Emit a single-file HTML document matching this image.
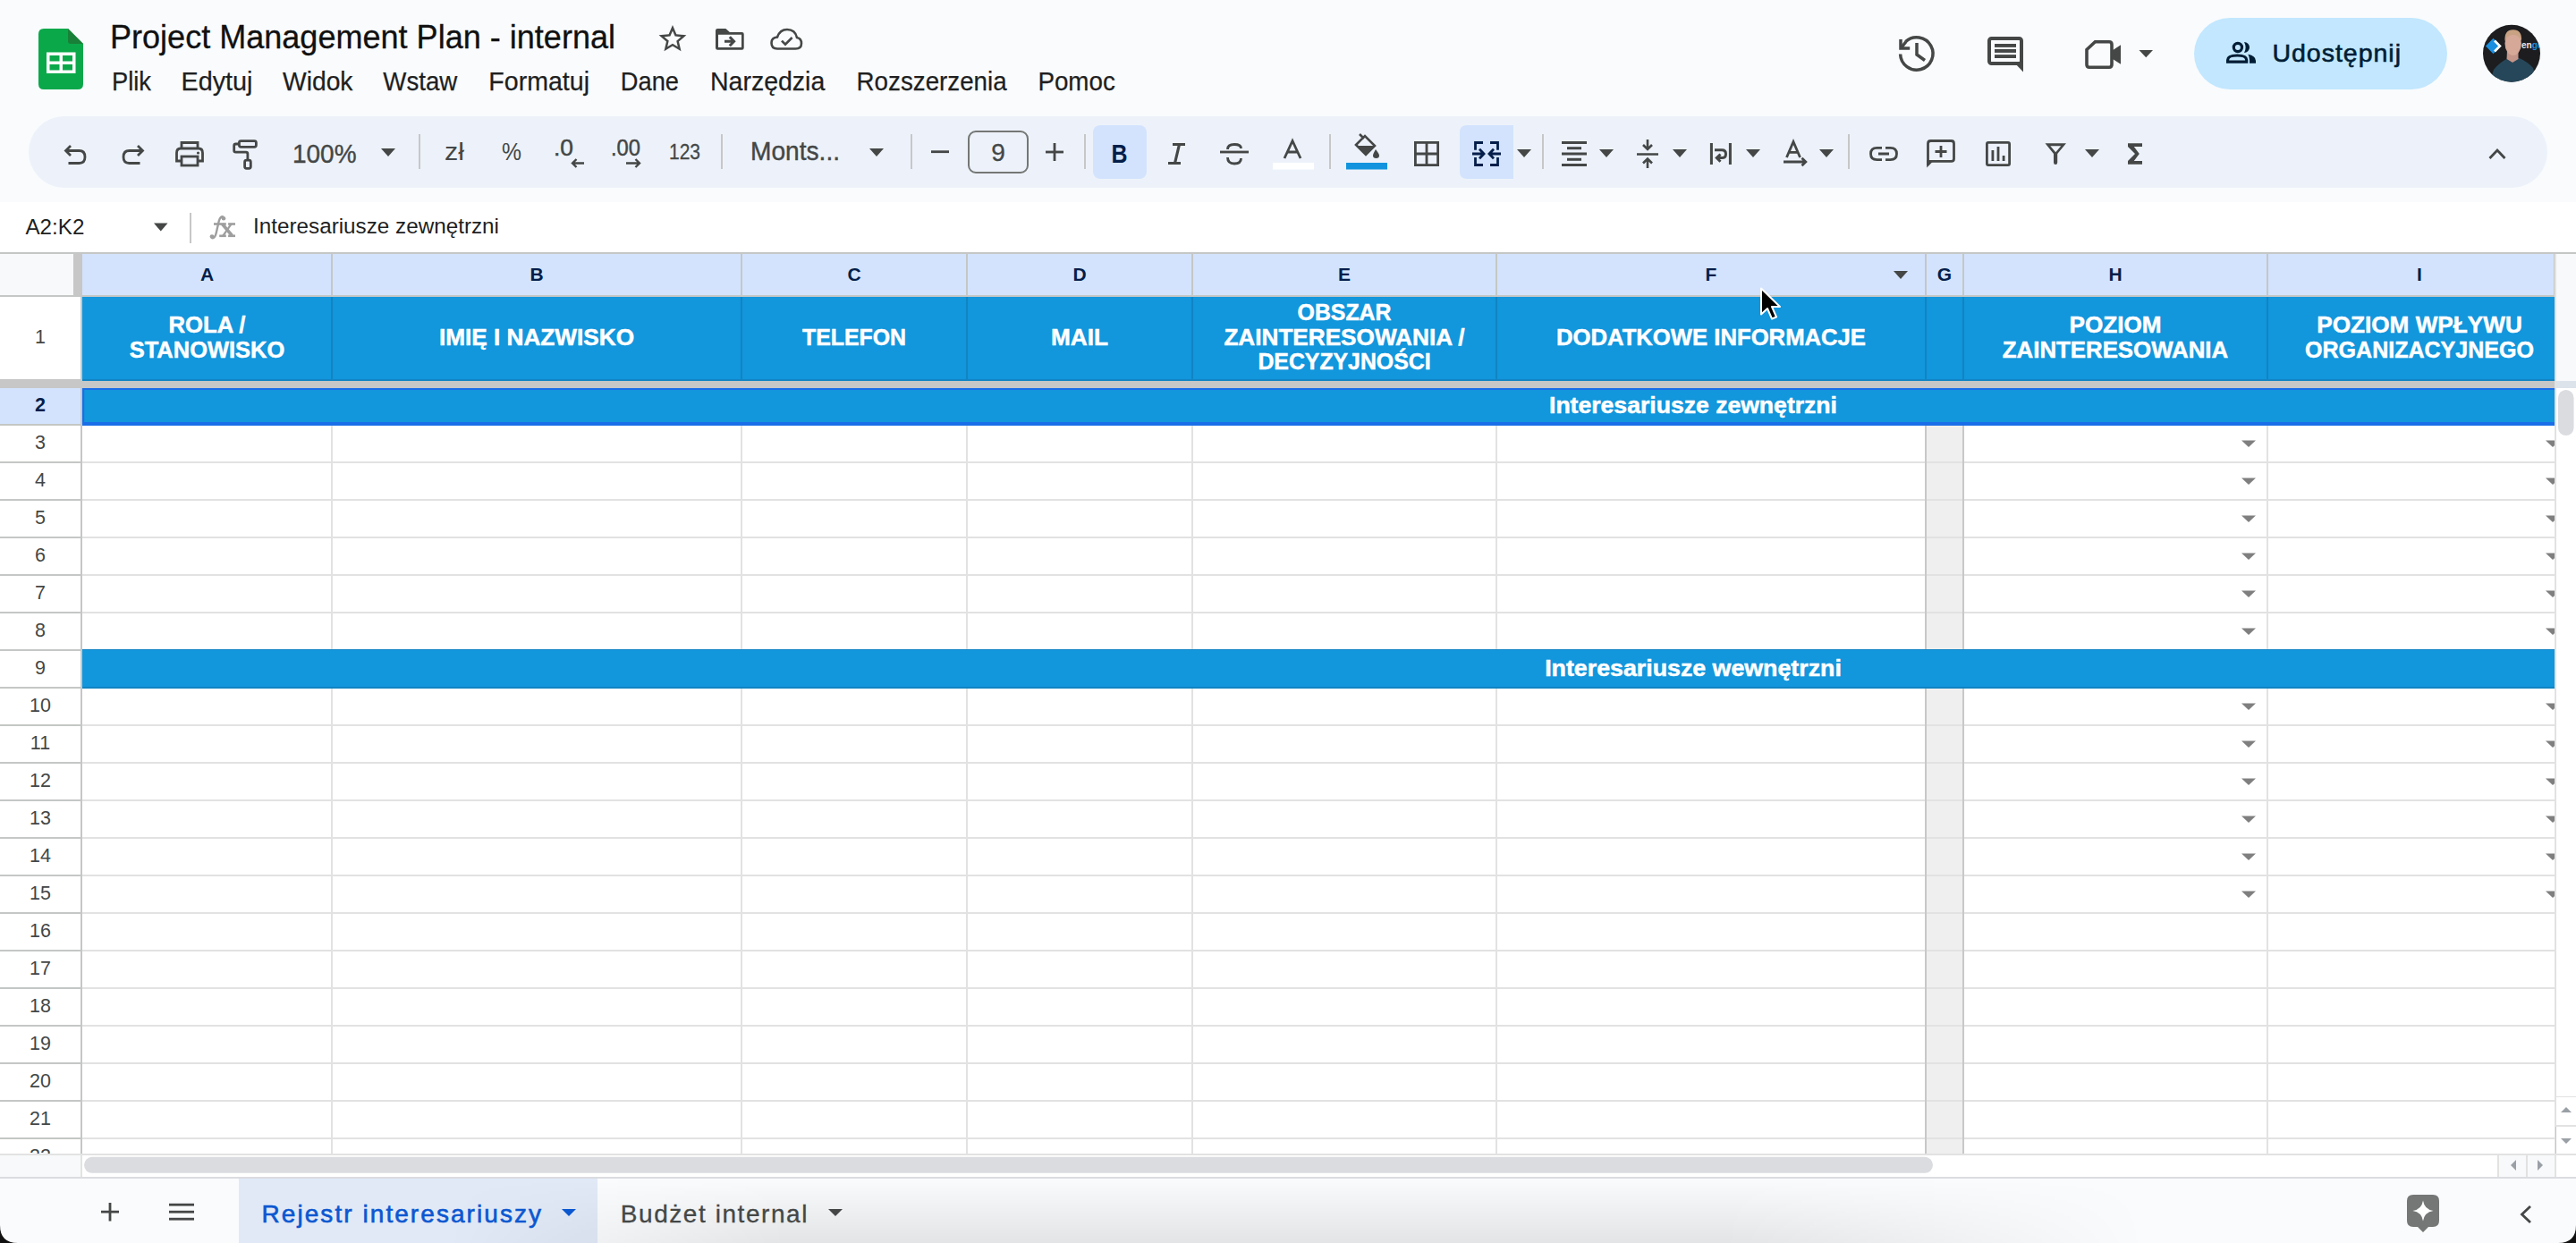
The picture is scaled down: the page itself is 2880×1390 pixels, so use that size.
<!DOCTYPE html>
<html><head><meta charset="utf-8"><title>Project Management Plan - internal</title>
<style>
html,body{margin:0;padding:0;width:2880px;height:1390px;overflow:hidden;background:#f9fbfd;}
svg{display:block;font-family:"Liberation Sans", sans-serif;}
</style></head><body>
<svg width="2880" height="1390" viewBox="0 0 2880 1390">
<rect x="0" y="0" width="2880" height="226" fill="#f9fbfd" rx="0" />
<path d="M49,32 H76 L93,49 V94 Q93,100 87,100 H49 Q43,100 43,94 V38 Q43,32 49,32 Z" fill="#0ba84a"/>
<path d="M76,32 L93,49 H79 Q76,49 76,46 Z" fill="#188038"/>
<rect x="52" y="58.5" width="32.5" height="23.5" fill="#fff"/>
<rect x="55.5" y="62" width="11" height="6.5" fill="#0ba84a"/><rect x="70" y="62" width="11" height="6.5" fill="#0ba84a"/>
<rect x="55.5" y="72" width="11" height="6.5" fill="#0ba84a"/><rect x="70" y="72" width="11" height="6.5" fill="#0ba84a"/>
<text x="123" y="54" font-size="36" fill="#111" font-weight="normal" text-anchor="start" textLength="565" lengthAdjust="spacingAndGlyphs" stroke="#111" stroke-width="0.3">Project Management Plan - internal</text>
<text x="125" y="101.3" font-size="29.3" fill="#1f1f1f" font-weight="normal" text-anchor="start" textLength="44" lengthAdjust="spacingAndGlyphs" stroke="#1f1f1f" stroke-width="0.25">Plik</text>
<text x="202.5" y="101.3" font-size="29.3" fill="#1f1f1f" font-weight="normal" text-anchor="start" textLength="80" lengthAdjust="spacingAndGlyphs" stroke="#1f1f1f" stroke-width="0.25">Edytuj</text>
<text x="316" y="101.3" font-size="29.3" fill="#1f1f1f" font-weight="normal" text-anchor="start" textLength="78.5" lengthAdjust="spacingAndGlyphs" stroke="#1f1f1f" stroke-width="0.25">Widok</text>
<text x="428.3" y="101.3" font-size="29.3" fill="#1f1f1f" font-weight="normal" text-anchor="start" textLength="83" lengthAdjust="spacingAndGlyphs" stroke="#1f1f1f" stroke-width="0.25">Wstaw</text>
<text x="546.3" y="101.3" font-size="29.3" fill="#1f1f1f" font-weight="normal" text-anchor="start" textLength="112.7" lengthAdjust="spacingAndGlyphs" stroke="#1f1f1f" stroke-width="0.25">Formatuj</text>
<text x="693.8" y="101.3" font-size="29.3" fill="#1f1f1f" font-weight="normal" text-anchor="start" textLength="65.2" lengthAdjust="spacingAndGlyphs" stroke="#1f1f1f" stroke-width="0.25">Dane</text>
<text x="794" y="101.3" font-size="29.3" fill="#1f1f1f" font-weight="normal" text-anchor="start" textLength="128.3" lengthAdjust="spacingAndGlyphs" stroke="#1f1f1f" stroke-width="0.25">Narzędzia</text>
<text x="957.6" y="101.3" font-size="29.3" fill="#1f1f1f" font-weight="normal" text-anchor="start" textLength="168" lengthAdjust="spacingAndGlyphs" stroke="#1f1f1f" stroke-width="0.25">Rozszerzenia</text>
<text x="1160.4" y="101.3" font-size="29.3" fill="#1f1f1f" font-weight="normal" text-anchor="start" textLength="86.4" lengthAdjust="spacingAndGlyphs" stroke="#1f1f1f" stroke-width="0.25">Pomoc</text>
<path transform="translate(733.5,25) scale(1.54)" d="M22 9.24l-7.19-.62L12 2 9.19 8.63 2 9.24l5.46 4.73L5.82 21 12 17.27 18.18 21l-1.63-7.03L22 9.24zM12 15.4l-3.76 2.27 1-4.28-3.32-2.88 4.38-.38L12 6.1l1.71 4.04 4.38.38-3.32 2.88 1 4.28L12 15.4z" fill="#444746"/>
<path fill-rule="evenodd" d="M800,34.2 Q800,32 802.2,32 H811.4 L815.9,35.9 H829.5 Q831.7,35.9 831.7,38.1 V53.6 Q831.7,55.8 829.5,55.8 H802.2 Q800,55.8 800,53.6 Z M803,38.8 H829 V53 H803 Z" fill="#444746"/>
<path d="M810,46.2 H820 M815.8,41.2 L820.6,46.2 L815.8,51.2" fill="none" stroke="#444746" stroke-width="3"/>
<path d="M869,54.5 Q862.5,54.5 862.5,48 Q862.5,42 869,41.5 Q872,33 880,33 Q889,33 891,42 Q896,43 896,48.5 Q896,54.5 889.5,54.5 Z" fill="none" stroke="#444746" stroke-width="2.6"/>
<path d="M874,45.6 L878,49.7 L885.6,42" fill="none" stroke="#444746" stroke-width="2.6"/>
<g fill="none" stroke="#444746" stroke-width="3.5"><path d="M2124.6,60.5 A18.2,18.2 0 1 0 2130.5,46.5"/><path d="M2125,44 V54 H2135.2"/><path d="M2126,53 L2131,46.5"/><path d="M2143,48 V61 L2152,67.5"/></g>
<rect x="2224" y="43" width="36" height="28" rx="2.5" fill="none" stroke="#444746" stroke-width="4"/>
<rect x="2230" y="49" width="24" height="3.9" fill="#444746"/><rect x="2230" y="55" width="24" height="3.9" fill="#444746"/><rect x="2230" y="61.1" width="24" height="3.9" fill="#444746"/>
<path d="M2252,70 L2262,80.6 V68 Z" fill="#444746"/>
<path d="M2342.4,46.7 H2358 Q2361,46.7 2361,49.7 V72.2 Q2361,75.2 2358,75.2 H2336 Q2333,75.2 2333,72.2 V55.5 Z" fill="none" stroke="#444746" stroke-width="3.6"/>
<path d="M2360,57.5 L2371,50.3 V71.7 L2360,64.7 Z" fill="#444746"/>
<path d="M2391.5,56 H2407 L2399.25,64.3 Z" fill="#444746"/>
<rect x="2453" y="20" width="283" height="80" fill="#c2e7ff" rx="40" />
<g fill="none" stroke="#001d35" stroke-width="3.2"><circle cx="2501.9" cy="53" r="4.6"/><path d="M2490.6,69.2 V67 Q2490.6,62 2501.2,62 Q2511.7,62 2511.7,67 V69.2 Z"/></g>
<path d="M2509,47 A6,6 0 0 1 2509,59 Q2512.3,53 2509,47 Z" fill="#001d35"/>
<path d="M2513.3,60.8 Q2522,62.5 2522,68 V70.8 H2515 V67 Q2515,63 2513.3,60.8 Z" fill="#001d35"/>
<text x="2540.4" y="68.9" font-size="28.5" fill="#001d35" font-weight="normal" text-anchor="start" textLength="143.6" lengthAdjust="spacing" stroke="#001d35" stroke-width="0.6">Udostępnij</text>
<defs><clipPath id="av"><circle cx="2808" cy="59.8" r="32"/></clipPath></defs>
<g clip-path="url(#av)"><rect x="2776" y="27" width="64" height="66" fill="#1d1d1f"/><path d="M2783,93 L2788,78 Q2794,70 2802.5,66 L2809,70 L2815.5,64.5 Q2826,69 2832,76 L2837,93 Z" fill="#26475a"/><path d="M2803,57 H2815.5 V66 L2809,70 L2802.5,66 Z" fill="#c4968a"/><ellipse cx="2809.7" cy="48.5" rx="9.2" ry="13.5" fill="#d5a898"/><path d="M2800.5,46 Q2799.5,33.3 2809.7,33.3 Q2820,33.3 2819,46 Q2816,38.5 2809.7,39 Q2803.5,38.5 2800.5,46 Z" fill="#c8a283"/><path d="M2787.5,42.8 L2796,51.5 L2787.5,60.2 L2779,51.5 Z" fill="#1a8fe0"/><path d="M2789,45.5 L2795,51.5 L2789,57.5" fill="none" stroke="#fff" stroke-width="2.6"/><text x="2819" y="54" font-size="10" font-weight="bold" fill="#e8e8e8">en<tspan fill="#1a8fe0">go</tspan></text></g>
<rect x="32" y="130" width="2816" height="80" fill="#edf2fa" rx="40" />
<path d="M79,163 L73.5,168.5 L79,174 M73.5,168.5 H88.5 Q95,168.5 95,175.5 Q95,182.5 88.5,182.5 H76.5" fill="none" stroke="#444746" stroke-width="2.8"/>
<path d="M154,163 L159.5,168.5 L154,174 M159.5,168.5 H144.5 Q138,168.5 138,175.5 Q138,182.5 144.5,182.5 H156.5" fill="none" stroke="#444746" stroke-width="2.8"/>
<g fill="none" stroke="#444746" stroke-width="2.8"><path d="M203,166 V159.5 H221 V166"/><path d="M203,180 H197.5 V171 Q197.5,166 202,166 H222 Q226.5,166 226.5,171 V180 H221"/><rect x="203" y="175" width="18" height="10"/></g><circle cx="221.5" cy="171" r="1.6" fill="#444746"/>
<g fill="none" stroke="#444746" stroke-width="2.8"><rect x="267.4" y="157.6" width="19" height="6.7" rx="2"/><path d="M266,161 H263.6 Q261.7,161 261.7,163 V168.3 Q261.7,170.2 263.6,170.2 H275 Q276.9,170.2 276.9,172 V179"/><rect x="273.6" y="179.2" width="6.7" height="9.1" rx="2"/></g>
<text x="327" y="182.2" font-size="29" fill="#444746" font-weight="normal" text-anchor="start" textLength="71.5" lengthAdjust="spacingAndGlyphs" stroke="#444746" stroke-width="0.4">100%</text>
<path d="M426,166 H442 L434.0,175 Z" fill="#444746"/>
<rect x="468" y="150" width="2" height="39" fill="#c7c7c7" rx="0" />
<text x="497" y="179.4" font-size="27" fill="#444746" font-weight="normal" text-anchor="start" textLength="22" lengthAdjust="spacingAndGlyphs" >zł</text>
<text x="561" y="179.4" font-size="27" fill="#444746" font-weight="normal" text-anchor="start" textLength="22" lengthAdjust="spacingAndGlyphs" >%</text>
<text x="619" y="173.5" font-size="26" fill="#444746" font-weight="normal" text-anchor="start" textLength="22" lengthAdjust="spacingAndGlyphs" stroke="#444746" stroke-width="0.5">.0</text>
<path d="M653,182.5 H640 M644.5,178 L640,182.5 L644.5,187" fill="none" stroke="#444746" stroke-width="2.4"/>
<text x="683" y="173.5" font-size="26" fill="#444746" font-weight="normal" text-anchor="start" textLength="33" lengthAdjust="spacingAndGlyphs" stroke="#444746" stroke-width="0.5">.00</text>
<path d="M700,182.5 H715 M710.5,178 L715,182.5 L710.5,187" fill="none" stroke="#444746" stroke-width="2.4"/>
<text x="748" y="178" font-size="23.5" fill="#444746" font-weight="normal" text-anchor="start" textLength="35" lengthAdjust="spacingAndGlyphs" stroke="#444746" stroke-width="0.3">123</text>
<rect x="806" y="150" width="2" height="39" fill="#c7c7c7" rx="0" />
<text x="839" y="179.4" font-size="28.8" fill="#444746" font-weight="normal" text-anchor="start" textLength="100" lengthAdjust="spacingAndGlyphs" stroke="#444746" stroke-width="0.4">Monts...</text>
<path d="M972,166 H988 L980.0,175 Z" fill="#444746"/>
<rect x="1018" y="150" width="2" height="39" fill="#c7c7c7" rx="0" />
<rect x="1041" y="168.3" width="20" height="2.8" fill="#444746" rx="0" />
<rect x="1083" y="147" width="66" height="46" fill="none" rx="8" stroke="#747775" stroke-width="2"/>
<text x="1116" y="180" font-size="28" fill="#444746" font-weight="normal" text-anchor="middle" stroke="#444746" stroke-width="0.3">9</text>
<rect x="1169" y="168.6" width="20" height="2.8" fill="#444746" rx="0" />
<rect x="1177.6" y="160" width="2.8" height="20" fill="#444746" rx="0" />
<rect x="1212" y="150" width="2" height="39" fill="#c7c7c7" rx="0" />
<rect x="1222" y="140" width="60" height="60" fill="#d3e3fd" rx="8" />
<text x="1242.5" y="181.7" font-size="29" fill="#041e49" font-weight="bold" text-anchor="start" textLength="18" lengthAdjust="spacingAndGlyphs" >B</text>
<path d="M1311,161.5 H1325 M1318.5,161.5 L1313.5,182.5 M1306,182.5 H1320" fill="none" stroke="#444746" stroke-width="3.2"/>
<path d="M1364,170 H1396" stroke="#444746" stroke-width="2.8"/><path d="M1372.5,167 Q1372.5,161.5 1380,161.5 Q1387.5,161.5 1387.5,166" fill="none" stroke="#444746" stroke-width="2.8"/><path d="M1372.5,176 Q1372.5,183 1380,183 Q1387.5,183 1387.5,177" fill="none" stroke="#444746" stroke-width="2.8"/>
<path d="M1436,177 L1445,157.5 L1454,177 M1439.5,170 H1450.5" fill="none" stroke="#444746" stroke-width="2.8"/>
<rect x="1423" y="182" width="46" height="7.5" fill="#ffffff" rx="0" />
<rect x="1486" y="150" width="2" height="39" fill="#c7c7c7" rx="0" />
<path d="M1520,150 L1525,155 M1516,162 L1526,152 L1537,163 L1527,173 Z" fill="none" stroke="#444746" stroke-width="2.6"/><path d="M1516,163 H1537 L1527,173 Z" fill="#444746"/><path d="M1538,167 Q1542,172 1542,174 Q1542,177 1538.5,177 Q1535,177 1535,174 Q1535,172 1538,167 Z" fill="#444746"/>
<rect x="1505" y="182" width="46" height="7.5" fill="#1194dd" rx="0" />
<g fill="none" stroke="#444746" stroke-width="2.8"><rect x="1582.4" y="159.4" width="25.2" height="25.2"/><path d="M1595,159.4 V184.6 M1582.4,172 H1607.6"/></g>
<path d="M1640,140 H1692 V200 H1640 Q1632,200 1632,192 V148 Q1632,140 1640,140 Z" fill="#d3e3fd"/>
<g fill="none" stroke="#041e49" stroke-width="2.8"><path d="M1658,159.5 H1649.5 V167.8 M1649.5,176 V184.5 H1658 M1666,159.5 H1674.5 V167.8 M1674.5,176 V184.5 H1666"/><path d="M1646,172 H1657 M1654,166.8 L1659,172 L1654,177.2 M1678,172 H1667 M1670,166.8 L1665,172 L1670,177.2"/></g>
<path d="M1696,167 H1712 L1704.0,176 Z" fill="#444746"/>
<rect x="1724" y="150" width="2" height="39" fill="#c7c7c7" rx="0" />
<g fill="#444746"><rect x="1746" y="158" width="28" height="3"/><rect x="1752" y="164.2" width="16" height="3"/><rect x="1746" y="170.5" width="28" height="3"/><rect x="1752" y="176.8" width="16" height="3"/><rect x="1746" y="183" width="28" height="3"/></g>
<path d="M1788,167 H1804 L1796.0,176 Z" fill="#444746"/>
<g fill="none" stroke="#444746" stroke-width="2.6"><path d="M1830,172.5 H1854 M1842,156 V166 M1837,162 L1842,167 L1847,162 M1842,188 V178 M1837,182.5 L1842,177.5 L1847,182.5"/></g>
<path d="M1870,167 H1886 L1878.0,176 Z" fill="#444746"/>
<g fill="none" stroke="#444746" stroke-width="3"><path d="M1913.4,160 V184 M1934.4,160 V184"/><path d="M1917,167.8 H1925 Q1929.5,167.8 1929.5,172.2 Q1929.5,176.6 1925,176.6 H1920 M1923.5,172.5 L1919.3,176.6 L1923.5,180.7"/></g>
<path d="M1952,167 H1968 L1960.0,176 Z" fill="#444746"/>
<g fill="none" stroke="#444746" stroke-width="2.8"><path d="M1997.5,176 L2005,158.5 L2012.5,176 M2000,170.3 H2010"/><path d="M1994,181 H2018 M2014.5,176.8 L2018.8,181 L2014.5,185.2"/></g>
<path d="M2034,167 H2050 L2042.0,176 Z" fill="#444746"/>
<rect x="2066" y="150" width="2" height="39" fill="#c7c7c7" rx="0" />
<g fill="none" stroke="#444746" stroke-width="2.8"><path d="M2104,165.4 H2098.5 Q2091.5,165.4 2091.5,172 Q2091.5,178.6 2098.5,178.6 H2104 M2108,165.4 H2113.5 Q2120.5,165.4 2120.5,172 Q2120.5,178.6 2113.5,178.6 H2108 M2100,172 H2112"/></g>
<g fill="none" stroke="#444746" stroke-width="2.8"><path d="M2155.5,185 V160.5 Q2155.5,157.5 2158.5,157.5 H2181.5 Q2184.5,157.5 2184.5,160.5 V177.5 Q2184.5,180.4 2181.5,180.4 H2159.5"/><path d="M2170,163 V176 M2163.5,169.5 H2176.5"/></g><path d="M2154.2,187.5 V179 H2162.5 Z" fill="#444746"/>
<g fill="none" stroke="#444746" stroke-width="2.8"><rect x="2221.4" y="159.4" width="25.2" height="25.2" rx="1.5"/></g><g fill="#444746"><rect x="2226.5" y="168" width="2.8" height="12"/><rect x="2232.6" y="164" width="2.8" height="16"/><rect x="2238.7" y="174" width="2.8" height="6"/></g>
<path fill-rule="evenodd" d="M2286.5,160.2 H2310 L2300.2,172 V181.8 Q2300.2,184 2298.1,184 Q2296,184 2296,181.8 V172 Z M2292.3,163.2 H2304.2 L2298.25,170.3 Z" fill="#444746"/>
<path d="M2331,167 H2347 L2339.0,176 Z" fill="#444746"/>
<path d="M2379,160.2 H2395 V163.9 H2385.8 L2391.8,172 L2385.8,180 H2395 V183.8 H2379 V180 L2387,172 L2379,164 Z" fill="#444746"/>
<path d="M2783.5,177 L2792,168 L2800.5,177" fill="none" stroke="#444746" stroke-width="2.8"/>
<rect x="0" y="226" width="2880" height="57" fill="#ffffff" rx="0" />
<text x="28.4" y="261.7" font-size="24.5" fill="#1f1f1f" font-weight="normal" text-anchor="start" textLength="66" lengthAdjust="spacingAndGlyphs" >A2:K2</text>
<path d="M172,249.6 H187.5 L179.75,258.6 Z" fill="#444746"/>
<rect x="212" y="238" width="2" height="34" fill="#c7c7c7" rx="0" />
<g fill="#9e9e9e"><path d="M236.5,266 Q240,267.5 241.6,261 L244.8,247 Q246.5,241.2 250,242.6" fill="none" stroke="#9e9e9e" stroke-width="2.4"/><circle cx="237" cy="264.6" r="2.4"/><circle cx="250" cy="244.2" r="2.3"/><rect x="239" y="249.2" width="13.8" height="2.6"/><rect x="255.1" y="249.2" width="7.9" height="2.6"/><rect x="245.2" y="262.5" width="7.6" height="2.6"/><rect x="255.1" y="262.5" width="7.9" height="2.6"/><path d="M248.5,250.5 L259.5,263.5" stroke="#9e9e9e" stroke-width="3.6"/><path d="M258.5,250.5 L249.5,263.5" stroke="#9e9e9e" stroke-width="2.2"/></g>
<text x="283" y="261" font-size="24.5" fill="#1f1f1f" font-weight="normal" text-anchor="start" textLength="275" lengthAdjust="spacingAndGlyphs" >Interesariusze zewnętrzni</text>
<rect x="0" y="284" width="2880" height="1007" fill="#ffffff" rx="0" />
<rect x="2153" y="475" width="42" height="816" fill="#efefef" rx="0" />
<rect x="92" y="516" width="2764" height="2" fill="#e2e2e2" rx="0" />
<rect x="92" y="558" width="2764" height="2" fill="#e2e2e2" rx="0" />
<rect x="92" y="600" width="2764" height="2" fill="#e2e2e2" rx="0" />
<rect x="92" y="642" width="2764" height="2" fill="#e2e2e2" rx="0" />
<rect x="92" y="684" width="2764" height="2" fill="#e2e2e2" rx="0" />
<rect x="92" y="726" width="2764" height="2" fill="#e2e2e2" rx="0" />
<rect x="92" y="768" width="2764" height="2" fill="#e2e2e2" rx="0" />
<rect x="92" y="810" width="2764" height="2" fill="#e2e2e2" rx="0" />
<rect x="92" y="852" width="2764" height="2" fill="#e2e2e2" rx="0" />
<rect x="92" y="894" width="2764" height="2" fill="#e2e2e2" rx="0" />
<rect x="92" y="936" width="2764" height="2" fill="#e2e2e2" rx="0" />
<rect x="92" y="978" width="2764" height="2" fill="#e2e2e2" rx="0" />
<rect x="92" y="1020" width="2764" height="2" fill="#e2e2e2" rx="0" />
<rect x="92" y="1062" width="2764" height="2" fill="#e2e2e2" rx="0" />
<rect x="92" y="1104" width="2764" height="2" fill="#e2e2e2" rx="0" />
<rect x="92" y="1146" width="2764" height="2" fill="#e2e2e2" rx="0" />
<rect x="92" y="1188" width="2764" height="2" fill="#e2e2e2" rx="0" />
<rect x="92" y="1230" width="2764" height="2" fill="#e2e2e2" rx="0" />
<rect x="92" y="1272" width="2764" height="2" fill="#e2e2e2" rx="0" />
<rect x="370" y="475" width="2" height="816" fill="#e2e2e2" rx="0" />
<rect x="828" y="475" width="2" height="816" fill="#e2e2e2" rx="0" />
<rect x="1080" y="475" width="2" height="816" fill="#e2e2e2" rx="0" />
<rect x="1332" y="475" width="2" height="816" fill="#e2e2e2" rx="0" />
<rect x="1672" y="475" width="2" height="816" fill="#e2e2e2" rx="0" />
<rect x="2152" y="475" width="2" height="816" fill="#e2e2e2" rx="0" />
<rect x="2194" y="475" width="2" height="816" fill="#e2e2e2" rx="0" />
<rect x="2534" y="475" width="2" height="816" fill="#e2e2e2" rx="0" />
<rect x="2152" y="475" width="2" height="816" fill="#c8c8c8" rx="0" />
<rect x="2194" y="475" width="2" height="816" fill="#c8c8c8" rx="0" />
<rect x="0" y="282" width="2880" height="2" fill="#c4c7c5" rx="0" />
<rect x="0" y="284" width="82" height="46" fill="#f8f9fa" rx="0" />
<rect x="82" y="284" width="10" height="46" fill="#c7c7c7" rx="0" />
<rect x="92" y="284" width="2764" height="46" fill="#d3e3fd" rx="0" />
<rect x="0" y="330" width="2856" height="2" fill="#c4c7c5" rx="0" />
<rect x="370" y="284" width="2" height="46" fill="#c4c7c5" rx="0" />
<rect x="828" y="284" width="2" height="46" fill="#c4c7c5" rx="0" />
<rect x="1080" y="284" width="2" height="46" fill="#c4c7c5" rx="0" />
<rect x="1332" y="284" width="2" height="46" fill="#c4c7c5" rx="0" />
<rect x="1672" y="284" width="2" height="46" fill="#c4c7c5" rx="0" />
<rect x="2152" y="284" width="2" height="46" fill="#c4c7c5" rx="0" />
<rect x="2194" y="284" width="2" height="46" fill="#c4c7c5" rx="0" />
<rect x="2534" y="284" width="2" height="46" fill="#c4c7c5" rx="0" />
<rect x="2855" y="284" width="2" height="46" fill="#c4c7c5" rx="0" />
<text x="231.5" y="314" font-size="21" fill="#041e49" font-weight="bold" text-anchor="middle" >A</text>
<text x="600.0" y="314" font-size="21" fill="#041e49" font-weight="bold" text-anchor="middle" >B</text>
<text x="955.0" y="314" font-size="21" fill="#041e49" font-weight="bold" text-anchor="middle" >C</text>
<text x="1207.0" y="314" font-size="21" fill="#041e49" font-weight="bold" text-anchor="middle" >D</text>
<text x="1503.0" y="314" font-size="21" fill="#041e49" font-weight="bold" text-anchor="middle" >E</text>
<text x="1913.0" y="314" font-size="21" fill="#041e49" font-weight="bold" text-anchor="middle" >F</text>
<text x="2174.0" y="314" font-size="21" fill="#041e49" font-weight="bold" text-anchor="middle" >G</text>
<text x="2365.0" y="314" font-size="21" fill="#041e49" font-weight="bold" text-anchor="middle" >H</text>
<text x="2705" y="314" font-size="21" fill="#041e49" font-weight="bold" text-anchor="middle" >I</text>
<path d="M2117,303 H2133 L2125.0,312 Z" fill="#444746"/>
<rect x="92" y="332" width="2764" height="94" fill="#1296dc" rx="0" />
<rect x="370" y="332" width="2" height="93" fill="#1184c3" rx="0" />
<rect x="828" y="332" width="2" height="93" fill="#1184c3" rx="0" />
<rect x="1080" y="332" width="2" height="93" fill="#1184c3" rx="0" />
<rect x="1332" y="332" width="2" height="93" fill="#1184c3" rx="0" />
<rect x="1672" y="332" width="2" height="93" fill="#1184c3" rx="0" />
<rect x="2152" y="332" width="2" height="93" fill="#1184c3" rx="0" />
<rect x="2194" y="332" width="2" height="93" fill="#1184c3" rx="0" />
<rect x="2534" y="332" width="2" height="93" fill="#1184c3" rx="0" />
<rect x="92" y="424" width="2764" height="2" fill="#1184c3" rx="0" />
<text x="231.5" y="372.2" font-size="25" fill="#ffffff" font-weight="bold" text-anchor="middle" textLength="86" lengthAdjust="spacingAndGlyphs" stroke="#fff" stroke-width="0.5">ROLA /</text>
<text x="231.5" y="399.8" font-size="25" fill="#ffffff" font-weight="bold" text-anchor="middle" textLength="173.6" lengthAdjust="spacingAndGlyphs" stroke="#fff" stroke-width="0.5">STANOWISKO</text>
<text x="600.0" y="386.0" font-size="25" fill="#ffffff" font-weight="bold" text-anchor="middle" textLength="218" lengthAdjust="spacingAndGlyphs" stroke="#fff" stroke-width="0.5">IMIĘ I NAZWISKO</text>
<text x="955.0" y="386.0" font-size="25" fill="#ffffff" font-weight="bold" text-anchor="middle" textLength="116" lengthAdjust="spacingAndGlyphs" stroke="#fff" stroke-width="0.5">TELEFON</text>
<text x="1207.0" y="386.0" font-size="25" fill="#ffffff" font-weight="bold" text-anchor="middle" textLength="64" lengthAdjust="spacingAndGlyphs" stroke="#fff" stroke-width="0.5">MAIL</text>
<text x="1503.0" y="358.0" font-size="25" fill="#ffffff" font-weight="bold" text-anchor="middle" textLength="104.8" lengthAdjust="spacingAndGlyphs" stroke="#fff" stroke-width="0.5">OBSZAR</text>
<text x="1503.0" y="385.65" font-size="25" fill="#ffffff" font-weight="bold" text-anchor="middle" textLength="269.2" lengthAdjust="spacingAndGlyphs" stroke="#fff" stroke-width="0.5">ZAINTERESOWANIA /</text>
<text x="1503.0" y="413.3" font-size="25" fill="#ffffff" font-weight="bold" text-anchor="middle" textLength="193.2" lengthAdjust="spacingAndGlyphs" stroke="#fff" stroke-width="0.5">DECYZYJNOŚCI</text>
<text x="1913.0" y="385.5" font-size="25" fill="#ffffff" font-weight="bold" text-anchor="middle" textLength="346" lengthAdjust="spacingAndGlyphs" stroke="#fff" stroke-width="0.5">DODATKOWE INFORMACJE</text>
<text x="2365.0" y="372.0" font-size="25" fill="#ffffff" font-weight="bold" text-anchor="middle" textLength="103" lengthAdjust="spacingAndGlyphs" stroke="#fff" stroke-width="0.5">POZIOM</text>
<text x="2365.0" y="399.6" font-size="25" fill="#ffffff" font-weight="bold" text-anchor="middle" textLength="252.3" lengthAdjust="spacingAndGlyphs" stroke="#fff" stroke-width="0.5">ZAINTERESOWANIA</text>
<text x="2705" y="372.0" font-size="25" fill="#ffffff" font-weight="bold" text-anchor="middle" textLength="229.6" lengthAdjust="spacingAndGlyphs" stroke="#fff" stroke-width="0.5">POZIOM WPŁYWU</text>
<text x="2705" y="399.6" font-size="25" fill="#ffffff" font-weight="bold" text-anchor="middle" textLength="255.9" lengthAdjust="spacingAndGlyphs" stroke="#fff" stroke-width="0.5">ORGANIZACYJNEGO</text>
<rect x="0" y="332" width="90" height="959" fill="#ffffff" rx="0" />
<rect x="90" y="332" width="2" height="959" fill="#c4c7c5" rx="0" />
<text x="45" y="384.3" font-size="21.5" fill="#444746" font-weight="normal" text-anchor="middle" >1</text>
<rect x="0" y="424" width="92" height="10" fill="#c7c7c7" rx="0" />
<rect x="92" y="426" width="2764" height="8" fill="#c7c7c7" rx="0" />
<rect x="0" y="434" width="90" height="40" fill="#d3e3fd" rx="0" />
<text x="45" y="459.8" font-size="21.5" fill="#041e49" font-weight="bold" text-anchor="middle" >2</text>
<rect x="92" y="434" width="2764" height="42" fill="#1296dc" rx="0" />
<text x="1893" y="462.2" font-size="25" fill="#ffffff" font-weight="bold" text-anchor="middle" textLength="322" lengthAdjust="spacingAndGlyphs" stroke="#fff" stroke-width="0.5">Interesariusze zewnętrzni</text>
<rect x="92" y="434" width="2764" height="2" fill="#1a6ee8" rx="0" />
<rect x="92" y="434" width="2.2" height="42" fill="#1a6ee8" rx="0" />
<rect x="92" y="472" width="2764" height="4" fill="#1a6ee8" rx="0" />
<rect x="92" y="727" width="2764" height="42" fill="#1296dc" rx="0" />
<rect x="92" y="726" width="2764" height="1" fill="#1184c3" rx="0" />
<rect x="92" y="768" width="2764" height="2" fill="#1184c3" rx="0" />
<text x="1893" y="756" font-size="25" fill="#ffffff" font-weight="bold" text-anchor="middle" textLength="331.7" lengthAdjust="spacingAndGlyphs" stroke="#fff" stroke-width="0.5">Interesariusze wewnętrzni</text>
<rect x="0" y="474" width="90" height="2" fill="#c4c7c5" rx="0" />
<rect x="0" y="516" width="90" height="2" fill="#c4c7c5" rx="0" />
<text x="45" y="501.8" font-size="21.5" fill="#444746" font-weight="normal" text-anchor="middle" >3</text>
<rect x="0" y="558" width="90" height="2" fill="#c4c7c5" rx="0" />
<text x="45" y="543.8" font-size="21.5" fill="#444746" font-weight="normal" text-anchor="middle" >4</text>
<rect x="0" y="600" width="90" height="2" fill="#c4c7c5" rx="0" />
<text x="45" y="585.8" font-size="21.5" fill="#444746" font-weight="normal" text-anchor="middle" >5</text>
<rect x="0" y="642" width="90" height="2" fill="#c4c7c5" rx="0" />
<text x="45" y="627.8" font-size="21.5" fill="#444746" font-weight="normal" text-anchor="middle" >6</text>
<rect x="0" y="684" width="90" height="2" fill="#c4c7c5" rx="0" />
<text x="45" y="669.8" font-size="21.5" fill="#444746" font-weight="normal" text-anchor="middle" >7</text>
<rect x="0" y="726" width="90" height="2" fill="#c4c7c5" rx="0" />
<text x="45" y="711.8" font-size="21.5" fill="#444746" font-weight="normal" text-anchor="middle" >8</text>
<rect x="0" y="768" width="90" height="2" fill="#c4c7c5" rx="0" />
<text x="45" y="753.8" font-size="21.5" fill="#444746" font-weight="normal" text-anchor="middle" >9</text>
<rect x="0" y="810" width="90" height="2" fill="#c4c7c5" rx="0" />
<text x="45" y="795.8" font-size="21.5" fill="#444746" font-weight="normal" text-anchor="middle" >10</text>
<rect x="0" y="852" width="90" height="2" fill="#c4c7c5" rx="0" />
<text x="45" y="837.8" font-size="21.5" fill="#444746" font-weight="normal" text-anchor="middle" >11</text>
<rect x="0" y="894" width="90" height="2" fill="#c4c7c5" rx="0" />
<text x="45" y="879.8" font-size="21.5" fill="#444746" font-weight="normal" text-anchor="middle" >12</text>
<rect x="0" y="936" width="90" height="2" fill="#c4c7c5" rx="0" />
<text x="45" y="921.8" font-size="21.5" fill="#444746" font-weight="normal" text-anchor="middle" >13</text>
<rect x="0" y="978" width="90" height="2" fill="#c4c7c5" rx="0" />
<text x="45" y="963.8" font-size="21.5" fill="#444746" font-weight="normal" text-anchor="middle" >14</text>
<rect x="0" y="1020" width="90" height="2" fill="#c4c7c5" rx="0" />
<text x="45" y="1005.8" font-size="21.5" fill="#444746" font-weight="normal" text-anchor="middle" >15</text>
<rect x="0" y="1062" width="90" height="2" fill="#c4c7c5" rx="0" />
<text x="45" y="1047.8" font-size="21.5" fill="#444746" font-weight="normal" text-anchor="middle" >16</text>
<rect x="0" y="1104" width="90" height="2" fill="#c4c7c5" rx="0" />
<text x="45" y="1089.8" font-size="21.5" fill="#444746" font-weight="normal" text-anchor="middle" >17</text>
<rect x="0" y="1146" width="90" height="2" fill="#c4c7c5" rx="0" />
<text x="45" y="1131.8" font-size="21.5" fill="#444746" font-weight="normal" text-anchor="middle" >18</text>
<rect x="0" y="1188" width="90" height="2" fill="#c4c7c5" rx="0" />
<text x="45" y="1173.8" font-size="21.5" fill="#444746" font-weight="normal" text-anchor="middle" >19</text>
<rect x="0" y="1230" width="90" height="2" fill="#c4c7c5" rx="0" />
<text x="45" y="1215.8" font-size="21.5" fill="#444746" font-weight="normal" text-anchor="middle" >20</text>
<rect x="0" y="1272" width="90" height="2" fill="#c4c7c5" rx="0" />
<text x="45" y="1257.8" font-size="21.5" fill="#444746" font-weight="normal" text-anchor="middle" >21</text>
<text x="45" y="1299.8" font-size="21.5" fill="#444746" font-weight="normal" text-anchor="middle" >22</text>
<path d="M2506,492.5 H2522 L2514.0,500.0 Z" fill="#7f7f7f"/>
<path d="M2846,492.5 H2862 L2854.0,500.0 Z" fill="#7f7f7f"/>
<path d="M2506,534.5 H2522 L2514.0,542.0 Z" fill="#7f7f7f"/>
<path d="M2846,534.5 H2862 L2854.0,542.0 Z" fill="#7f7f7f"/>
<path d="M2506,576.5 H2522 L2514.0,584.0 Z" fill="#7f7f7f"/>
<path d="M2846,576.5 H2862 L2854.0,584.0 Z" fill="#7f7f7f"/>
<path d="M2506,618.5 H2522 L2514.0,626.0 Z" fill="#7f7f7f"/>
<path d="M2846,618.5 H2862 L2854.0,626.0 Z" fill="#7f7f7f"/>
<path d="M2506,660.5 H2522 L2514.0,668.0 Z" fill="#7f7f7f"/>
<path d="M2846,660.5 H2862 L2854.0,668.0 Z" fill="#7f7f7f"/>
<path d="M2506,702.5 H2522 L2514.0,710.0 Z" fill="#7f7f7f"/>
<path d="M2846,702.5 H2862 L2854.0,710.0 Z" fill="#7f7f7f"/>
<path d="M2506,786.5 H2522 L2514.0,794.0 Z" fill="#7f7f7f"/>
<path d="M2846,786.5 H2862 L2854.0,794.0 Z" fill="#7f7f7f"/>
<path d="M2506,828.5 H2522 L2514.0,836.0 Z" fill="#7f7f7f"/>
<path d="M2846,828.5 H2862 L2854.0,836.0 Z" fill="#7f7f7f"/>
<path d="M2506,870.5 H2522 L2514.0,878.0 Z" fill="#7f7f7f"/>
<path d="M2846,870.5 H2862 L2854.0,878.0 Z" fill="#7f7f7f"/>
<path d="M2506,912.5 H2522 L2514.0,920.0 Z" fill="#7f7f7f"/>
<path d="M2846,912.5 H2862 L2854.0,920.0 Z" fill="#7f7f7f"/>
<path d="M2506,954.5 H2522 L2514.0,962.0 Z" fill="#7f7f7f"/>
<path d="M2846,954.5 H2862 L2854.0,962.0 Z" fill="#7f7f7f"/>
<path d="M2506,996.5 H2522 L2514.0,1004.0 Z" fill="#7f7f7f"/>
<path d="M2846,996.5 H2862 L2854.0,1004.0 Z" fill="#7f7f7f"/>
<rect x="2856" y="284" width="24" height="142" fill="#f8f9fa" rx="0" />
<rect x="2856" y="426" width="24" height="8" fill="#dde3ea" rx="0" />
<rect x="2856" y="434" width="24" height="857" fill="#ffffff" rx="0" />
<rect x="2856" y="284" width="2" height="1007" fill="#e2e2e2" rx="0" />
<rect x="2860" y="436" width="17.5" height="51" fill="#dadce0" rx="8.75" />
<rect x="2856" y="1226" width="24" height="1" fill="#e2e2e2" rx="0" />
<rect x="2856" y="1258" width="24" height="2" fill="#e2e2e2" rx="0" />
<path d="M2863,1244 L2869,1238 L2875,1244 Z" fill="#9aa0a6"/><path d="M2863,1273 H2875 L2869,1279 Z" fill="#9aa0a6"/>
<rect x="2857" y="1260" width="1" height="30" fill="#c4c7c5" rx="0" />
<rect x="0" y="1290" width="2880" height="2" fill="#e2e2e2" rx="0" />
<rect x="0" y="1292" width="2880" height="24" fill="#ffffff" rx="0" />
<rect x="0" y="1292" width="90" height="24" fill="#f8f9fa" rx="0" />
<rect x="90" y="1292" width="2" height="24" fill="#e2e2e2" rx="0" />
<rect x="94" y="1293.8" width="2067" height="18" fill="#dadce0" rx="9" />
<rect x="2793" y="1292" width="63" height="24" fill="#f8f9fa" rx="0" />
<rect x="2792" y="1292" width="2" height="24" fill="#e2e2e2" rx="0" />
<rect x="2824" y="1292" width="2" height="24" fill="#e2e2e2" rx="0" />
<rect x="2856" y="1292" width="2" height="24" fill="#e2e2e2" rx="0" />
<path d="M2813,1297 L2807,1303 L2813,1309 Z" fill="#9aa0a6"/><path d="M2837,1297 L2843,1303 L2837,1309 Z" fill="#9aa0a6"/>
<rect x="0" y="1316" width="2880" height="2" fill="#dadce0" rx="0" />
<rect x="0" y="1318" width="2880" height="72" fill="#f9fbfd" rx="0" />
<defs><linearGradient id="sh" x1="0" y1="0" x2="0" y2="1"><stop offset="0" stop-color="#000" stop-opacity="0"/><stop offset="1" stop-color="#000" stop-opacity="0.09"/></linearGradient><linearGradient id="shm" x1="0" y1="0" x2="1" y2="0"><stop offset="0" stop-color="#fff" stop-opacity="0"/><stop offset="0.2" stop-color="#fff" stop-opacity="1"/><stop offset="0.75" stop-color="#fff" stop-opacity="1"/><stop offset="1" stop-color="#fff" stop-opacity="0"/></linearGradient><mask id="shmask"><rect x="500" y="1318" width="1900" height="72" fill="url(#shm)"/></mask></defs>
<rect x="267" y="1318" width="401" height="72" fill="#e1e9f7" rx="0" />
<rect x="500" y="1318" width="1900" height="72" fill="url(#sh)" mask="url(#shmask)"/>
<path d="M113,1355.2 H133 M123,1345 V1365.5" stroke="#444746" stroke-width="2.8"/>
<g fill="#444746"><rect x="189" y="1345.8" width="28" height="2.8"/><rect x="189" y="1353.8" width="28" height="2.8"/><rect x="189" y="1361.8" width="28" height="2.8"/></g>
<text x="292.5" y="1366.5" font-size="28" fill="#0b57d0" font-weight="normal" text-anchor="start" textLength="312.5" lengthAdjust="spacing" stroke="#0b57d0" stroke-width="0.6">Rejestr interesariuszy</text>
<path d="M628,1352 H644 L636.0,1360 Z" fill="#0b57d0"/>
<text x="693.8" y="1366.5" font-size="28" fill="#444746" font-weight="normal" text-anchor="start" textLength="208.6" lengthAdjust="spacing" stroke="#444746" stroke-width="0.3">Budżet internal</text>
<path d="M926,1352 H942 L934.0,1360 Z" fill="#444746"/>
<path d="M2698,1336 H2720 Q2727,1336 2727,1343 V1365 Q2727,1372 2720,1372 H2715 L2709,1378 L2703,1372 H2698 Q2691,1372 2691,1365 V1343 Q2691,1336 2698,1336 Z" fill="#747775"/>
<path d="M2709,1342.5 Q2710.5,1352.5 2720.5,1354 Q2710.5,1355.5 2709,1365.5 Q2707.5,1355.5 2697.5,1354 Q2707.5,1352.5 2709,1342.5 Z" fill="#fff"/>
<path d="M2829,1349 L2819.5,1358 L2829,1367" fill="none" stroke="#444746" stroke-width="2.8"/>
<path d="M0,1370 V1390 H20 Q0,1390 0,1370 Z" fill="#111"/>
<path d="M2880,1370 V1390 H2860 Q2880,1390 2880,1370 Z" fill="#111"/>
<path d="M1969,322.5 V351.5 L1976,345 L1981,356.5 L1986,354.5 L1981,343 H1990 Z" fill="#000" stroke="#fff" stroke-width="2" stroke-linejoin="round"/>
</svg>
</body></html>
